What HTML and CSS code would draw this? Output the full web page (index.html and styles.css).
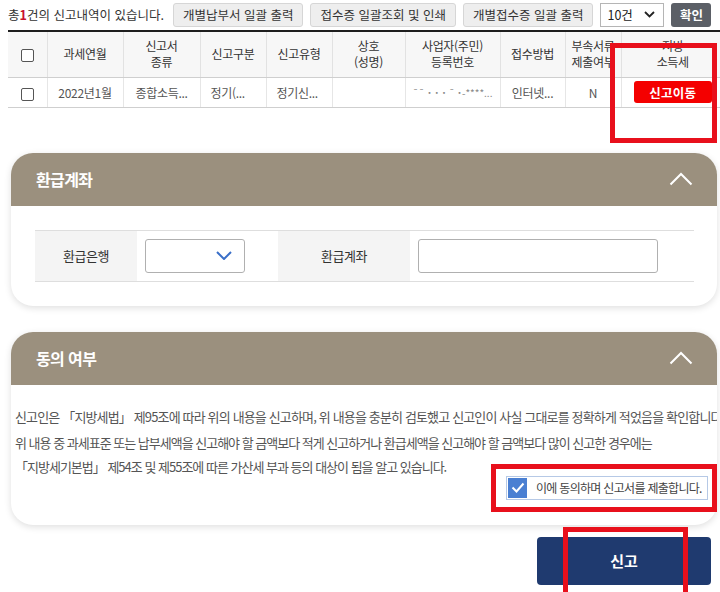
FILE: index.html
```html
<!DOCTYPE html>
<html lang="ko">
<head>
<meta charset="utf-8">
<title>신고내역</title>
<link rel="stylesheet" href="styles.css">
</head>
<body>
<div class="page">
  <div class="toolbar">
    <p class="count">총<em>1</em>건의 신고내역이 있습니다.</p>
    <button class="btn">개별납부서 일괄 출력</button>
    <button class="btn">접수증 일괄조회 및 인쇄</button>
    <button class="btn">개별접수증 일괄 출력</button>
    <div class="select-sm"><span>10건</span><svg width="11" height="7" viewBox="0 0 11 7"><polyline points="1,1 5.5,5.5 10,1" fill="none" stroke="#222" stroke-width="1.8"/></svg></div>
    <button class="btn-dark">확인</button>
  </div>

  <table class="list">
    <colgroup>
      <col class="c1"><col class="c2"><col class="c3"><col class="c4"><col class="c5"><col class="c6"><col class="c7"><col class="c8"><col class="c9"><col class="c10">
    </colgroup>
    <thead>
      <tr>
        <th><span class="cb"></span></th>
        <th>과세연월</th>
        <th>신고서<br>종류</th>
        <th>신고구분</th>
        <th>신고유형</th>
        <th>상호<br>(성명)</th>
        <th>사업자(주민)<br>등록번호</th>
        <th>접수방법</th>
        <th>부속서류<br>제출여부</th>
        <th>지방<br>소득세</th>
      </tr>
    </thead>
    <tbody>
      <tr>
        <td><span class="cb"></span></td>
        <td>2022년1월</td>
        <td>종합소득...</td>
        <td class="left">정기(...</td>
        <td class="left">정기신...</td>
        <td></td>
        <td class="mask">¯¯ ˙ ˙ ˙ ¯ ˙-****...</td>
        <td>인터넷...</td>
        <td>N</td>
        <td><button class="btn-red">신고이동</button></td>
      </tr>
    </tbody>
  </table>

  <section class="card card-refund">
    <div class="card-head">
      <h2>환급계좌</h2>
      <svg class="chev" width="24" height="14" viewBox="0 0 24 14"><polyline points="1.5,12.5 12,2 22.5,12.5" fill="none" stroke="#fff" stroke-width="2"/></svg>
    </div>
    <div class="card-body refund-body">
      <div class="form-row">
        <div class="label">환급은행</div>
        <div class="field field-bank">
          <div class="select-bank"><svg width="16" height="9" viewBox="0 0 16 9"><polyline points="1,1 8,8 15,1" fill="none" stroke="#3a6fc8" stroke-width="2"/></svg></div>
        </div>
        <div class="label label-wide">환급계좌</div>
        <div class="field field-acct">
          <div class="input"></div>
        </div>
      </div>
    </div>
  </section>

  <section class="card card-consent">
    <div class="card-head">
      <h2>동의 여부</h2>
      <svg class="chev" width="24" height="14" viewBox="0 0 24 14"><polyline points="1.5,12.5 12,2 22.5,12.5" fill="none" stroke="#fff" stroke-width="2"/></svg>
    </div>
    <div class="card-body consent-body">
      <p class="p1">신고인은 「지방세법」 제95조에 따라 위의 내용을 신고하며, 위 내용을 충분히 검토했고 신고인이 사실 그대로를 정확하게 적었음을 확인합니다.</p>
      <p>위 내용 중 과세표준 또는 납부세액을 신고해야 할 금액보다 적게 신고하거나 환급세액을 신고해야 할 금액보다 많이 신고한 경우에는<br>「지방세기본법」 제54조 및 제55조에 따른 가산세 부과 등의 대상이 됨을 알고 있습니다.</p>
      <div class="agree-row">
        <label class="agree">
          <span class="check"><svg width="14" height="11" viewBox="0 0 14 11"><polyline points="1.5,5.5 5.5,9.5 12.5,1.5" fill="none" stroke="#fff" stroke-width="2"/></svg></span>
          이에 동의하며 신고서를 제출합니다.
        </label>
      </div>
    </div>
  </section>

  <div class="actions">
    <button class="btn-submit">신고</button>
  </div>

  <div class="mark mark-1"></div>
  <div class="mark mark-2"></div>
  <div class="mark mark-3"></div>
</div>
</body>
</html>
```

FILE: styles.css
```css
* { box-sizing: border-box; }
html, body { margin: 0; padding: 0; background: #fff; }
body {
  font-family: "Noto Sans CJK KR", "Noto Sans", sans-serif;
  color: #333;
}
.page {
  position: relative;
  width: 720px;
  height: 592px;
  overflow: hidden;
}

/* toolbar */
.toolbar {
  display: flex;
  align-items: center;
  height: 29px;
  padding-left: 8px;
  gap: 7px;
}
.count {
  margin: 0 2px 0 0;
  font-size: 12.5px;
  letter-spacing: 0;
  color: #333;
  white-space: nowrap;
}
.count em { font-style: normal; color: #c8102e; font-weight: bold; }
.btn {
  height: 24px;
  padding: 0 9px;
  background: #eeeeee;
  border: 1px solid #d6d6d6;
  border-radius: 3px;
  font-family: inherit;
  font-size: 12.5px;
  letter-spacing: 0;
  color: #333;
  white-space: nowrap;
}
.select-sm {
  width: 64px;
  height: 24px;
  border: 1px solid #b5b5b5;
  display: flex;
  align-items: center;
  justify-content: space-between;
  padding: 0 8px 0 6px;
  font-size: 12.5px;
  color: #222;
  background: #fff;
}
.btn-dark {
  width: 40px;
  height: 24px;
  border: 0;
  border-radius: 3px;
  background: #5b5f66;
  color: #fff;
  font-family: inherit;
  font-size: 12.5px;
  font-weight: bold;
}

/* list table */
.list {
  margin: 1px 0 0 8px;
  width: 716px;
  border-collapse: collapse;
  table-layout: fixed;
  border-top: 2px solid #1e1e1e;
  font-size: 12px;
}
.c1 { width: 39px; } .c2 { width: 76px; } .c3 { width: 77px; } .c4 { width: 66px; }
.c5 { width: 66px; } .c6 { width: 73px; } .c7 { width: 95px; } .c8 { width: 65px; }
.c9 { width: 56px; } .c10 { width: 103px; }
.list th {
  height: 46px;
  background: #f7f7f7;
  font-weight: normal;
  color: #333;
  line-height: 16px;
  letter-spacing: -0.3px;
  border-left: 1px solid #e2e2e2;
  border-bottom: 1px solid #cfcfcf;
  white-space: nowrap;
  overflow: hidden;
}
.list td {
  height: 30px;
  text-align: center;
  color: #555;
  letter-spacing: -0.3px;
  border-left: 1px solid #e6e6e6;
  border-bottom: 1px solid #cfcfcf;
  white-space: nowrap;
  overflow: hidden;
}
.list td.left { text-align: left; padding-left: 10px; }
.list th:first-child, .list td:first-child { border-left: 0; }
.list td.mask { color: #888; font-size: 10px; letter-spacing: 0; }
.cb {
  display: inline-block;
  width: 13px;
  height: 13px;
  border: 1px solid #555;
  border-radius: 2px;
  vertical-align: middle;
  background: #fff;
}
.btn-red {
  width: 78px;
  height: 22px;
  border: 0;
  border-radius: 3px;
  background: #f40000;
  color: #fff;
  font-family: inherit;
  font-size: 12.5px;
  font-weight: bold;
  letter-spacing: 0.3px;
}

/* cards */
.card {
  margin-left: 11px;
  width: 706px;
  background: #fff;
  border-radius: 22px;
  box-shadow: 0 2px 7px rgba(0, 0, 0, 0.13);
  overflow: hidden;
}
.card-refund { margin-top: 45px; }
.card-consent { margin-top: 26px; }
.card-head {
  height: 53px;
  background: #9b907e;
  display: flex;
  align-items: center;
  justify-content: space-between;
  padding: 0 24px 0 25px;
}
.card-head h2 {
  margin: 0;
  color: #fff;
  font-size: 16px;
  font-weight: bold;
  letter-spacing: -0.6px;
}
.chev { margin-top: -1px; }

.refund-body { padding: 24px 23px 24px 24px; }
.form-row {
  display: flex;
  height: 52px;
  border-top: 1px solid #dedede;
  border-bottom: 1px solid #dedede;
}
.label {
  width: 102px;
  background: #f4f4f4;
  display: flex;
  align-items: center;
  justify-content: center;
  font-size: 13px;
  color: #333;
  letter-spacing: -0.4px;
}
.label-wide { width: 132px; }
.field { display: flex; align-items: center; padding-left: 8px; }
.field-bank { width: 141px; }
.field-acct { flex: 1; }
.select-bank {
  width: 100px;
  height: 34px;
  border: 1px solid #b0b0b0;
  border-radius: 3px;
  display: flex;
  align-items: center;
  justify-content: flex-end;
  padding-right: 12px;
}
.input {
  width: 240px;
  height: 34px;
  border: 1px solid #b0b0b0;
  border-radius: 3px;
}

.consent-body {
  padding: 20px 0 25px 4px;
  font-size: 13px;
  color: #555;
  line-height: 24px;
  letter-spacing: -1px;
  white-space: nowrap;
}
.consent-body p { margin: 0 0 2px; }
.consent-body .p1 { letter-spacing: -0.85px; }
.agree-row {
  display: flex;
  justify-content: flex-end;
  padding-right: 9px;
  margin-top: -5px;
}
.agree {
  display: flex;
  align-items: center;
  gap: 9px;
  width: 202px;
  height: 24px;
  border: 1px solid #b6c9e6;
  font-size: 12px;
  color: #444;
  letter-spacing: -0.7px;
  padding-left: 1px;
}
.check {
  width: 19px;
  height: 20px;
  background: #4a7fd2;
  display: flex;
  align-items: center;
  justify-content: center;
}

.actions {
  display: flex;
  justify-content: flex-end;
  padding: 12px 9px 0 0;
}
.btn-submit {
  width: 174px;
  height: 48px;
  border: 0;
  border-radius: 4px;
  background: #1f3a6f;
  color: #fff;
  font-family: inherit;
  font-size: 15px;
  font-weight: bold;
}

/* red annotation boxes */
.mark {
  position: absolute;
  border: 5px solid #e8101c;
}
.mark-1 { left: 610px; top: 43px; width: 107px; height: 100px; }
.mark-2 { left: 491px; top: 464px; width: 226px; height: 48px; }
.mark-3 { left: 563px; top: 527px; width: 125px; height: 75px; }
```
